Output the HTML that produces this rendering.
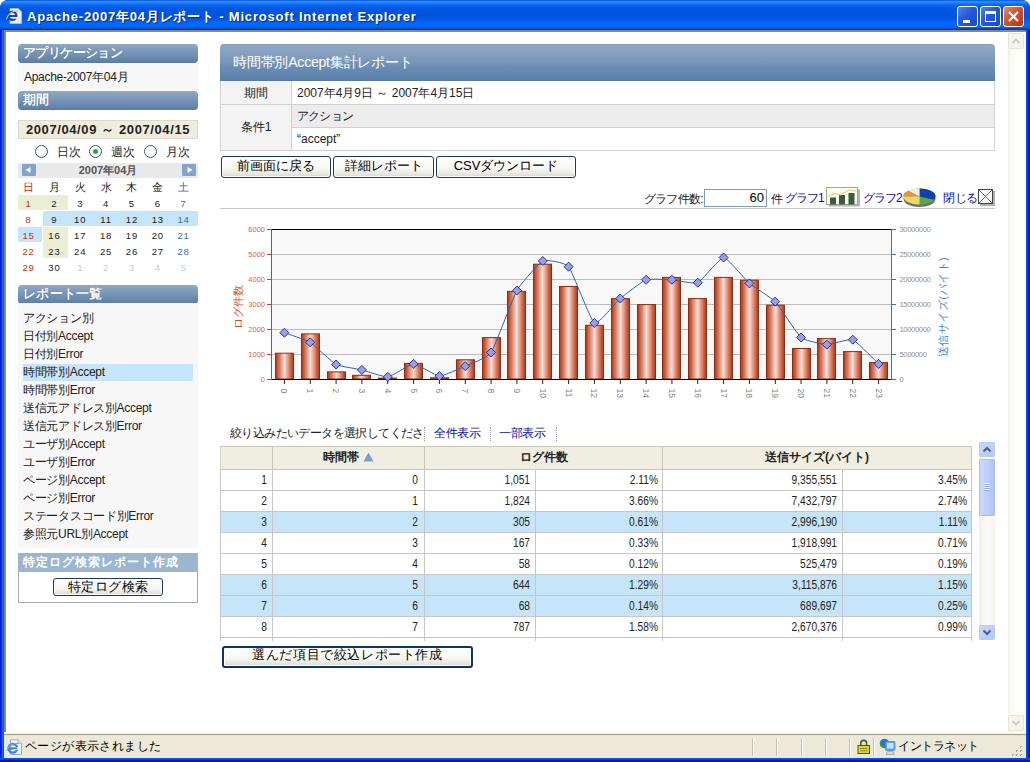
<!DOCTYPE html>
<html lang="ja">
<head>
<meta charset="utf-8">
<title>Apache-2007年04月レポート - Microsoft Internet Explorer</title>
<style>
*{box-sizing:border-box;margin:0;padding:0}
html,body{width:1030px;height:762px;overflow:hidden;background:#fff}
body{font-family:"Liberation Sans",sans-serif;font-size:12px;color:#222;position:relative}
.abs{position:absolute}
.nw{white-space:nowrap;overflow:hidden}
/* window chrome */
#win{position:absolute;left:0;top:0;width:1030px;height:762px;background:#0831d9;border-radius:8px 8px 0 0;overflow:hidden}
#titlebar{position:absolute;left:0;top:0;width:1030px;height:30px;border-radius:8px 8px 0 0;
background:linear-gradient(to bottom,#0050d8 0px,#2e88fc 1.500px,#2a84fa 2.500px,#1270f0 4px,#0a62ea 6px,#0056e2 9px,#0054e0 16px,#0058ea 19px,#0264f6 22px,#0468fa 24px,#0466f6 27px,#0050d4 28.500px,#002e98 30px)}
#title{position:absolute;left:27px;top:9px;height:16px;line-height:16px;font-size:13px;font-weight:bold;color:#fff;letter-spacing:.8px;text-shadow:1px 1px 1px #0a2a80;white-space:nowrap}
.tbtn{position:absolute;top:6px;width:21px;height:21px;border:1px solid #fff;border-radius:3px;background:linear-gradient(135deg,#4f83ef 0%,#2659dd 45%,#1a48c8 100%)}
#client{position:absolute;left:4px;top:30px;width:1022px;height:728px;background:#fff;border-top:2px solid #8a8a84;border-left:2px solid #8a8a84}
/* status bar */
#status{position:absolute;left:4px;top:732px;width:1022px;height:26px;background:linear-gradient(to bottom,#fbfaf4 0,#f2f0e6 2px,#a29f8e 2px,#a29f8e 3px,#dedbca 3px,#ece9d8 4.500px,#ece9d8 100%);font-size:12px;color:#000}
.sep{position:absolute;top:6px;width:2px;height:18px;border-left:1px solid #c5c2b2;border-right:1px solid #fff}
/* page scrollbar */
#vsb{position:absolute;left:1008px;top:32px;width:17px;height:700px;background:linear-gradient(to right,#f1f0e8 0,#fbfaf5 3px,#fefefb 10px,#fdfdf9 18px)}
.sbbtn{position:absolute;left:0;width:16px;height:16px;border:1px solid #e6e4d9;border-radius:2px;background:#f5f4ed}
/* side panel */
.shead{position:absolute;left:18px;width:180px;height:19px;border-radius:4px;color:#fff;font-weight:bold;font-size:13px;line-height:18px;padding-left:5px;
background:linear-gradient(to bottom,#90a8c2 0%,#7b98b9 40%,#6384ab 85%,#587aa3 100%);text-shadow:0 0 1px #3d5878;white-space:nowrap;overflow:hidden}
.sbg{position:absolute;left:18px;width:180px;background:#f7f7f7}
.li{position:absolute;left:23px;height:18px;line-height:18px;font-size:12px;color:#222;white-space:nowrap;letter-spacing:-.3px}
.cal{position:absolute;width:26px;height:15px;line-height:15px;text-align:center;font-size:9.500px;letter-spacing:.8px;color:#1a1a1a}
.red{color:#c03020}.blue{color:#3a6ea5}.gray{color:#c8c8c8}
.radio{position:absolute;width:13px;height:13px;border-radius:50%;border:1px solid #37608f;background:radial-gradient(circle at 35% 35%,#fff 40%,#dcdcd4 100%)}
.xpbtn{position:absolute;height:22px;border:1px solid #17376d;border-radius:3px;background:linear-gradient(to bottom,#fff 0%,#f6f6f2 60%,#e4e3da 90%,#d2d0c4 100%);
font-size:13px;line-height:17px;text-align:center;color:#000;white-space:nowrap;overflow:hidden;box-shadow:inset 0 0 0 1px #fdfdfb}
/* main */
#mhead{position:absolute;left:220px;top:44px;width:775px;height:37px;border-radius:4px 4px 0 0;color:#fff;font-size:14px;line-height:37px;padding-left:13px;letter-spacing:-.2px;
background:linear-gradient(to bottom,#8798aa 0,#8ea6c2 1px,#88a2c0 22%,#7a98ba 45%,#6a8cb3 65%,#5b80aa 96%,#56799f 100%);white-space:nowrap;overflow:hidden}
.cell{position:absolute;border:1px solid #d0d0d0;font-size:12px;color:#222;white-space:nowrap;overflow:hidden}
.lnk{color:#0808b4}
/* data table */
.th{position:absolute;top:446px;height:24px;background:#f0eee1;border:1px solid #c9c7ba;font-weight:bold;font-size:12px;line-height:21px;text-align:center;color:#222;white-space:nowrap;overflow:hidden}
.row{position:absolute;left:221px;width:751px;height:21px;border-bottom:1px solid #c6c6c6}
.row.sel{background:#c6e4fa}
.row span{position:absolute;top:0;height:20px;line-height:21px;font-size:12px;color:#222;text-align:right;white-space:nowrap;transform:scaleX(.85);transform-origin:100% 50%}
.vl{position:absolute;width:1px;background:#c6c6c6}
</style>
</head>
<body>
<div id="win">
<div id="titlebar">
<svg class="abs" style="left:5px;top:7px" width="18" height="18" viewBox="0 0 18 18">
<path d="M5 1.500h8l3.500 3.500v11.500H5z" fill="#f6f3ea" stroke="#c8c4b4" stroke-width=".7"/>
<path d="M13 1.500v3.500h3.500z" fill="#fff" stroke="#b4b0a0" stroke-width=".5"/>
<path d="M9.500 9.500h6.500v6.500H8z" fill="#f2e6e0" opacity=".8"/>
<circle cx="7.300" cy="8.800" r="4" fill="none" stroke="#1746b0" stroke-width="2.400"/>
<path d="M3.500 8.900h8.200" stroke="#1746b0" stroke-width="2"/>
<path d="M8.300 10h4.700v1.700H8.300z" fill="#f6f3ea"/>
<path d="M1.300 12.300C2.800 6.800 8.500 3 13 4.300" fill="none" stroke="#8ac0f8" stroke-width="1.200"/>
</svg>
<div id="title">Apache-2007年04月レポート - Microsoft Internet Explorer</div>
<div class="tbtn" style="left:957px"><div class="abs" style="left:5px;top:13px;width:7px;height:3px;background:#fff"></div></div>
<div class="tbtn" style="left:980px"><div class="abs" style="left:4px;top:4px;width:11px;height:11px;border:1px solid #fff;border-top-width:3px"></div></div>
<div class="tbtn" style="left:1003px;background:linear-gradient(135deg,#e88a6a 0%,#d8512a 45%,#b83210 100%)"><svg class="abs" style="left:0;top:0" width="19" height="19"><path d="M5 5l9 9M14 5l-9 9" stroke="#fff" stroke-width="2.2"/></svg></div>
</div>
<div id="client"></div>
<div class="abs" style="left:0;top:30px;width:4px;height:732px;background:linear-gradient(to right,#0019cf 0,#0019cf 1px,#0831d9 1px,#0831d9 2px,#166aee 2px,#166aee 3px,#0855dd 3px)"></div>
<div class="abs" style="left:1026px;top:30px;width:4px;height:732px;background:linear-gradient(to right,#0855dd 0,#0855dd 1px,#0441d8 1px,#0441d8 2px,#0029c4 2px,#0029c4 3px,#00138c 3px)"></div>
<div class="abs" style="left:0;top:758px;width:1030px;height:4px;background:linear-gradient(to bottom,#0855dd 0,#0855dd 1px,#0441d8 1px,#0441d8 2px,#001dbb 2px,#001dbb 3px,#00138c 3px)"></div>
<div id="vsb"><div class="sbbtn" style="top:1px"><svg width="14" height="14"><path d="M3.5 9l3.5-3.5L10.5 9" fill="none" stroke="#cfcdc0" stroke-width="1.8"/></svg></div><div class="sbbtn" style="top:683px"><svg width="14" height="14"><path d="M3.5 5l3.5 3.5L10.5 5" fill="none" stroke="#cfcdc0" stroke-width="1.8"/></svg></div></div>
<div id="status">
<svg class="abs" style="left:2px;top:7px" width="17" height="17" viewBox="0 0 17 17"><path d="M4.500 .8h7.500l3.500 3.500v11.200h-11z" fill="#f4f6fc" stroke="#8a98b8" stroke-width=".8"/><path d="M12 .8v3.500h3.500" fill="#dfe6f4" stroke="#8a98b8" stroke-width=".6"/><circle cx="6.800" cy="9.300" r="4.300" fill="none" stroke="#2f86e0" stroke-width="2.300"/><path d="M3 9.500h7.500" stroke="#2f86e0" stroke-width="1.900"/><path d="M7.500 8.200h5.500v2.600h-5.500z" fill="#f4f6fc"/><path d="M3 9.300h8.200" stroke="#2f86e0" stroke-width="1.700"/><path d="M.8 11.800C2.500 6.500 8 3.600 12.500 4.600" fill="none" stroke="#66aef0" stroke-width="1.100"/></svg>
<div class="abs nw" style="left:21px;top:6px;height:17px;line-height:17px;letter-spacing:.4px">ページが表示されました</div>
<div class="sep" style="left:748px"></div>
<div class="sep" style="left:772px"></div>
<div class="sep" style="left:797px"></div>
<div class="sep" style="left:821px"></div>
<div class="sep" style="left:845px"></div>
<div class="sep" style="left:869px"></div>
<svg class="abs" style="left:852px;top:6px" width="15" height="17" viewBox="0 0 15 17"><path d="M4.800 8V5.300a2.900 2.900 0 015.800 0V8" fill="none" stroke="#505048" stroke-width="1.600"/><rect x="2" y="7.500" width="11.500" height="8" fill="#e6d628" stroke="#56500c" stroke-width="1"/><path d="M4 10.500h7.500M4 12.800h7.500" stroke="#8c8010" stroke-width=".9"/></svg>
<svg class="abs" style="left:874px;top:5px" width="19" height="20" viewBox="0 0 19 20"><circle cx="6.500" cy="6.500" r="4.800" fill="#2f9e48"/><path d="M3 4c2-2.500 5-1.500 6.500 0s1 4.500-1.500 5.500c-2 .5-3.500-.5-5-2z" fill="#2c6edc"/><rect x="7.500" y="4.500" width="9.500" height="9" rx="1" fill="#5aa6ee" stroke="#4a8ad8" stroke-width=".8"/><rect x="9" y="6" width="6.500" height="5.500" fill="#bfe4ff"/><path d="M9.500 14.500h5.500l1.500 3H8z" fill="#d8d8d4" stroke="#8c8c88" stroke-width=".6"/></svg>
<div class="abs nw" style="left:894px;top:6px;height:17px;line-height:17px;letter-spacing:-.5px">イントラネット</div>
<svg class="abs" style="left:1006px;top:12px" width="14" height="14"><g fill="#b0ad9c"><rect x="10" y="10" width="2" height="2"/><rect x="6" y="10" width="2" height="2"/><rect x="2" y="10" width="2" height="2"/><rect x="10" y="6" width="2" height="2"/><rect x="6" y="6" width="2" height="2"/><rect x="10" y="2" width="2" height="2"/></g><g fill="#fff"><rect x="11" y="11" width="1" height="1"/><rect x="7" y="11" width="1" height="1"/><rect x="3" y="11" width="1" height="1"/><rect x="11" y="7" width="1" height="1"/><rect x="7" y="7" width="1" height="1"/><rect x="11" y="3" width="1" height="1"/></g></svg>
</div>
<div class="sbg" style="top:62px;height:29px"></div>
<div class="shead" style="top:44px;letter-spacing:-.6px">アプリケーション</div>
<div class="li" style="top:68px;left:24px">Apache-2007年04月</div>
<div class="shead" style="top:91px">期間</div>
<div class="abs nw" style="left:18px;top:120px;width:180px;height:19px;background:#efecdd;border:1px solid #dcd9ca;font-weight:bold;font-size:13px;line-height:17px;text-align:center;color:#222;letter-spacing:.6px">2007/04/09 ～ 2007/04/15</div>
<div class="radio" style="left:35px;top:145px"></div>
<div class="abs nw" style="left:57px;top:144px;height:16px;line-height:16px;font-size:12px">日次</div>
<div class="radio" style="left:89px;top:145px"><div class="abs" style="left:3px;top:3px;width:5px;height:5px;border-radius:50%;background:#2fa82f"></div></div>
<div class="abs nw" style="left:111px;top:144px;height:16px;line-height:16px;font-size:12px">週次</div>
<div class="radio" style="left:144px;top:145px"></div>
<div class="abs nw" style="left:166px;top:144px;height:16px;line-height:16px;font-size:12px">月次</div>
<div class="abs" style="left:18px;top:163px;width:180px;height:15px;background:#e9e9e9"></div>
<div class="abs nw" style="left:18px;top:163px;width:180px;height:15px;line-height:15px;text-align:center;font-size:11px;font-weight:bold;color:#555">2007年04月</div>
<div class="abs" style="left:22px;top:164px;width:14px;height:12px;background:#86a3d0;border-radius:1px"><svg class="abs" style="left:0;top:0" width="14" height="12"><path d="M8.500 3v6L3.500 6z" fill="#fff"/></svg></div>
<div class="abs" style="left:182px;top:164px;width:14px;height:12px;background:#86a3d0;border-radius:1px"><svg class="abs" style="left:0;top:0" width="14" height="12"><path d="M5.500 3v6l5-3z" fill="#fff"/></svg></div>
<div class="cal red" style="left:15.5px;top:179px;font-size:11px;letter-spacing:0;height:16px;line-height:16px">日</div>
<div class="cal " style="left:41.4px;top:179px;font-size:11px;letter-spacing:0;height:16px;line-height:16px">月</div>
<div class="cal " style="left:67.2px;top:179px;font-size:11px;letter-spacing:0;height:16px;line-height:16px">火</div>
<div class="cal " style="left:93.1px;top:179px;font-size:11px;letter-spacing:0;height:16px;line-height:16px">水</div>
<div class="cal " style="left:118.9px;top:179px;font-size:11px;letter-spacing:0;height:16px;line-height:16px">木</div>
<div class="cal " style="left:144.8px;top:179px;font-size:11px;letter-spacing:0;height:16px;line-height:16px">金</div>
<div class="cal blue" style="left:170.6px;top:179px;font-size:11px;letter-spacing:0;height:16px;line-height:16px">土</div>
<div class="abs" style="left:18.0px;top:195px;width:50.0px;height:15px;background:#e9efd3"></div>
<div class="abs" style="left:43.3px;top:211px;width:154.7px;height:15px;background:#c6e4fa"></div>
<div class="abs" style="left:18.0px;top:227px;width:24.4px;height:15px;background:#c6e4fa"></div>
<div class="abs" style="left:43.3px;top:227px;width:24.7px;height:16px;background:#e9efd3"></div>
<div class="abs" style="left:43.3px;top:243px;width:24.7px;height:15px;background:#e9efd3"></div>
<div class="cal red" style="left:15.5px;top:196px">1</div>
<div class="cal " style="left:41.4px;top:196px">2</div>
<div class="cal " style="left:67.2px;top:196px">3</div>
<div class="cal " style="left:93.1px;top:196px">4</div>
<div class="cal " style="left:118.9px;top:196px">5</div>
<div class="cal " style="left:144.8px;top:196px">6</div>
<div class="cal blue" style="left:170.6px;top:196px">7</div>
<div class="cal red" style="left:15.5px;top:212px">8</div>
<div class="cal " style="left:41.4px;top:212px">9</div>
<div class="cal " style="left:67.2px;top:212px">10</div>
<div class="cal " style="left:93.1px;top:212px">11</div>
<div class="cal " style="left:118.9px;top:212px">12</div>
<div class="cal " style="left:144.8px;top:212px">13</div>
<div class="cal blue" style="left:170.6px;top:212px">14</div>
<div class="cal red" style="left:15.5px;top:228px">15</div>
<div class="cal " style="left:41.4px;top:228px">16</div>
<div class="cal " style="left:67.2px;top:228px">17</div>
<div class="cal " style="left:93.1px;top:228px">18</div>
<div class="cal " style="left:118.9px;top:228px">19</div>
<div class="cal " style="left:144.8px;top:228px">20</div>
<div class="cal blue" style="left:170.6px;top:228px">21</div>
<div class="cal red" style="left:15.5px;top:244px">22</div>
<div class="cal " style="left:41.4px;top:244px">23</div>
<div class="cal " style="left:67.2px;top:244px">24</div>
<div class="cal " style="left:93.1px;top:244px">25</div>
<div class="cal " style="left:118.9px;top:244px">26</div>
<div class="cal " style="left:144.8px;top:244px">27</div>
<div class="cal blue" style="left:170.6px;top:244px">28</div>
<div class="cal red" style="left:15.5px;top:260px">29</div>
<div class="cal " style="left:41.4px;top:260px">30</div>
<div class="cal gray" style="left:67.2px;top:260px">1</div>
<div class="cal gray" style="left:93.1px;top:260px">2</div>
<div class="cal gray" style="left:118.9px;top:260px">3</div>
<div class="cal gray" style="left:144.8px;top:260px">4</div>
<div class="cal gray" style="left:170.6px;top:260px;color:#b9cfe4">5</div>
<div class="shead" style="top:285px;letter-spacing:.3px">レポート一覧</div>
<div class="sbg" style="top:303px;height:245px"></div>
<div class="li" style="top:309px">アクション別</div>
<div class="li" style="top:327px">日付別Accept</div>
<div class="li" style="top:345px">日付別Error</div>
<div class="abs" style="left:23px;top:364px;width:170px;height:17px;background:#c6e4fa"></div>
<div class="li" style="top:363px">時間帯別Accept</div>
<div class="li" style="top:381px">時間帯別Error</div>
<div class="li" style="top:399px">送信元アドレス別Accept</div>
<div class="li" style="top:417px">送信元アドレス別Error</div>
<div class="li" style="top:435px">ユーザ別Accept</div>
<div class="li" style="top:453px">ユーザ別Error</div>
<div class="li" style="top:471px">ページ別Accept</div>
<div class="li" style="top:489px">ページ別Error</div>
<div class="li" style="top:507px">ステータスコード別Error</div>
<div class="li" style="top:525px">参照元URL別Accept</div>
<div class="abs" style="left:18px;top:553px;width:180px;height:50px;border:1px solid #a8a8b0;background:#fff"></div>
<div class="abs nw" style="left:18px;top:553px;width:180px;height:19px;background:#9cb6d0;color:#fff;font-weight:bold;font-size:12px;line-height:19px;padding-left:5px;letter-spacing:1px">特定ログ検索レポート作成</div>
<div class="xpbtn" style="left:53px;top:578px;width:110px;height:18px;line-height:15px;letter-spacing:.5px">特定ログ検索</div>
<div class="cell" style="left:220px;top:80px;width:72px;height:25px;background:#f3f3f3;line-height:24px;text-align:center">期間</div>
<div class="cell" style="left:291px;top:80px;width:704px;height:25px;line-height:24px;padding-left:5px;letter-spacing:0">2007年4月9日 ～ 2007年4月15日</div>
<div class="cell" style="left:220px;top:104px;width:72px;height:47px;background:#f3f3f3;line-height:45px;text-align:center">条件1</div>
<div class="cell" style="left:291px;top:104px;width:704px;height:24px;background:#ececec;line-height:22px;padding-left:5px;letter-spacing:-.8px">アクション</div>
<div class="cell" style="left:291px;top:127px;width:704px;height:24px;line-height:22px;padding-left:5px">“accept”</div>
<div id="mhead">時間帯別Accept集計レポート</div>
<div class="xpbtn" style="left:221px;top:156px;width:110px">前画面に戻る</div>
<div class="xpbtn" style="left:333px;top:156px;width:101px">詳細レポート</div>
<div class="xpbtn" style="left:436px;top:156px;width:140px">CSVダウンロード</div>
<div class="abs" style="right:327px;top:190px;height:18px;line-height:18px;letter-spacing:-.7px;white-space:nowrap">グラフ件数:</div>
<div class="abs nw" style="left:704px;top:189px;width:63px;height:18px;border:1px solid #7f9db9;background:#fff;text-align:right;padding-right:2px;font-size:13px;line-height:16px;color:#000">60</div>
<div class="abs nw" style="left:771px;top:190px;height:18px;line-height:18px">件</div>
<div class="abs lnk" style="right:206px;top:189px;height:18px;line-height:18px;letter-spacing:-.8px;white-space:nowrap">グラフ1</div>
<svg class="abs" style="left:826px;top:187px" width="35" height="21" viewBox="0 0 35 21"><rect x="2.500" y="2.500" width="31.500" height="17" fill="#b4b4b0"/><rect x=".5" y=".5" width="31" height="17" fill="#fdfdee" stroke="#a4a494"/><rect x="4" y="10.500" width="6" height="7" fill="#3c5c38"/><rect x="13" y="8" width="6" height="9.500" fill="#3c5c38"/><rect x="22.500" y="6" width="6" height="11.500" fill="#3c5c38"/><path d="M1.500 9.500l7.500-3 5.500 1.500 8-5 8 1" fill="none" stroke="#dccc6c" stroke-width="1"/></svg>
<div class="abs lnk" style="right:128px;top:189px;height:18px;line-height:18px;letter-spacing:-.8px;white-space:nowrap">グラフ2</div>
<svg class="abs" style="left:902px;top:187px" width="35" height="21" viewBox="0 0 35 21"><ellipse cx="17.5" cy="12" rx="16" ry="8" fill="#707070"/><ellipse cx="17.5" cy="9.5" rx="16" ry="8" fill="#58a848"/><path d="M17.5 9.5V1.5A16 8 0 0133.5 9.5a16 8 0 01-1.5 3.2z" fill="#1040b0"/><path d="M17.5 9.5L6 3.8A16 8 0 0117.5 1.5z" fill="#f0ece0"/><path d="M17.5 9.5H1.5A16 8 0 016 3.8z" fill="#f09030"/><path d="M17.5 9.5V17.5A16 8 0 011.5 9.5z" fill="#f0d868"/></svg>
<div class="abs lnk" style="right:53px;top:189px;height:18px;line-height:18px;letter-spacing:-.8px;white-space:nowrap">閉じる</div>
<svg class="abs" style="left:977px;top:188px" width="19" height="19" viewBox="0 0 19 19"><rect x="3" y="3" width="15" height="15" fill="#b0b0b0"/><rect x="1.5" y="1.5" width="14" height="14" fill="#fff" stroke="#444"/><path d="M1.5 1.5l14 14M15.500 1.5l-14 14" stroke="#444" stroke-width=".8"/></svg>
<div class="abs" style="left:220px;top:208px;width:775px;height:1px;background:#c8c8c8"></div>
<svg class="abs" style="left:225px;top:218px" width="770" height="190" viewBox="0 0 770 190" font-family="Liberation Sans, sans-serif">
<defs><linearGradient id="bg" x1="0" x2="1" y1="0" y2="0"><stop offset="0" stop-color="#a83a1c"/><stop offset=".12" stop-color="#c4583a"/><stop offset=".5" stop-color="#fddcd2"/><stop offset=".88" stop-color="#c4583a"/><stop offset="1" stop-color="#a83a1c"/></linearGradient></defs>
<rect x="46" y="11" width="620" height="150" fill="#f8f8f8"/>
<rect x="46" y="136" width="620" height="1" fill="#bcbcbc"/>
<rect x="46" y="111" width="620" height="1" fill="#bcbcbc"/>
<rect x="46" y="86" width="620" height="1" fill="#bcbcbc"/>
<rect x="46" y="61" width="620" height="1" fill="#bcbcbc"/>
<rect x="46" y="36" width="620" height="1" fill="#bcbcbc"/>
<rect x="50.5" y="135.2" width="18" height="25.8" fill="url(#bg)" stroke="#8e2c14" stroke-width="1"/>
<rect x="76.5" y="115.9" width="18" height="45.1" fill="url(#bg)" stroke="#8e2c14" stroke-width="1"/>
<rect x="102.5" y="153.9" width="18" height="7.1" fill="url(#bg)" stroke="#8e2c14" stroke-width="1"/>
<rect x="127.5" y="157.3" width="18" height="3.7" fill="url(#bg)" stroke="#8e2c14" stroke-width="1"/>
<rect x="153.5" y="160.1" width="18" height="1.0" fill="url(#bg)" stroke="#8e2c14" stroke-width="1"/>
<rect x="179.5" y="145.4" width="18" height="15.6" fill="url(#bg)" stroke="#8e2c14" stroke-width="1"/>
<rect x="205.5" y="159.8" width="18" height="1.2" fill="url(#bg)" stroke="#8e2c14" stroke-width="1"/>
<rect x="231.5" y="141.8" width="18" height="19.2" fill="url(#bg)" stroke="#8e2c14" stroke-width="1"/>
<rect x="257.5" y="119.6" width="18" height="41.4" fill="url(#bg)" stroke="#8e2c14" stroke-width="1"/>
<rect x="282.5" y="73.4" width="18" height="87.6" fill="url(#bg)" stroke="#8e2c14" stroke-width="1"/>
<rect x="308.5" y="46.2" width="18" height="114.8" fill="url(#bg)" stroke="#8e2c14" stroke-width="1"/>
<rect x="334.5" y="68.5" width="18" height="92.5" fill="url(#bg)" stroke="#8e2c14" stroke-width="1"/>
<rect x="360.5" y="107.3" width="18" height="53.7" fill="url(#bg)" stroke="#8e2c14" stroke-width="1"/>
<rect x="386.5" y="80.6" width="18" height="80.4" fill="url(#bg)" stroke="#8e2c14" stroke-width="1"/>
<rect x="412.5" y="86.6" width="18" height="74.4" fill="url(#bg)" stroke="#8e2c14" stroke-width="1"/>
<rect x="437.5" y="59.4" width="18" height="101.6" fill="url(#bg)" stroke="#8e2c14" stroke-width="1"/>
<rect x="463.5" y="80.6" width="18" height="80.4" fill="url(#bg)" stroke="#8e2c14" stroke-width="1"/>
<rect x="489.5" y="59.4" width="18" height="101.6" fill="url(#bg)" stroke="#8e2c14" stroke-width="1"/>
<rect x="515.5" y="62.2" width="18" height="98.8" fill="url(#bg)" stroke="#8e2c14" stroke-width="1"/>
<rect x="541.5" y="87.2" width="18" height="73.8" fill="url(#bg)" stroke="#8e2c14" stroke-width="1"/>
<rect x="567.5" y="130.5" width="18" height="30.5" fill="url(#bg)" stroke="#8e2c14" stroke-width="1"/>
<rect x="592.5" y="120.6" width="18" height="40.4" fill="url(#bg)" stroke="#8e2c14" stroke-width="1"/>
<rect x="618.5" y="133.6" width="18" height="27.4" fill="url(#bg)" stroke="#8e2c14" stroke-width="1"/>
<rect x="644.5" y="144.6" width="18" height="16.4" fill="url(#bg)" stroke="#8e2c14" stroke-width="1"/>
<rect x="46" y="11" width="621" height="1" fill="#000"/>
<rect x="46" y="161" width="621" height="1" fill="#000"/>
<rect x="46" y="11" width="1" height="151" fill="#c8401c"/>
<rect x="666" y="11" width="1" height="151" fill="#2f78b8"/>
<rect x="42" y="161" width="4" height="1" fill="#c8401c"/>
<rect x="667" y="161" width="4" height="1" fill="#2f78b8"/>
<text x="40" y="164" font-size="7.5" fill="#dc6040" text-anchor="end">0</text>
<text x="674.5" y="164.2" font-size="7.6" letter-spacing="-.35" fill="#8e8e8e">0</text>
<rect x="42" y="136" width="4" height="1" fill="#c8401c"/>
<rect x="667" y="136" width="4" height="1" fill="#2f78b8"/>
<text x="40" y="139" font-size="7.5" fill="#dc6040" text-anchor="end">1000</text>
<text x="674.5" y="139.2" font-size="7.6" letter-spacing="-.35" fill="#8e8e8e">5000000</text>
<rect x="42" y="111" width="4" height="1" fill="#c8401c"/>
<rect x="667" y="111" width="4" height="1" fill="#2f78b8"/>
<text x="40" y="114" font-size="7.5" fill="#dc6040" text-anchor="end">2000</text>
<text x="674.5" y="114.2" font-size="7.6" letter-spacing="-.35" fill="#8e8e8e">10000000</text>
<rect x="42" y="86" width="4" height="1" fill="#c8401c"/>
<rect x="667" y="86" width="4" height="1" fill="#2f78b8"/>
<text x="40" y="89" font-size="7.5" fill="#dc6040" text-anchor="end">3000</text>
<text x="674.5" y="89.2" font-size="7.6" letter-spacing="-.35" fill="#8e8e8e">15000000</text>
<rect x="42" y="61" width="4" height="1" fill="#c8401c"/>
<rect x="667" y="61" width="4" height="1" fill="#2f78b8"/>
<text x="40" y="64" font-size="7.5" fill="#dc6040" text-anchor="end">4000</text>
<text x="674.5" y="64.2" font-size="7.6" letter-spacing="-.35" fill="#8e8e8e">20000000</text>
<rect x="42" y="36" width="4" height="1" fill="#c8401c"/>
<rect x="667" y="36" width="4" height="1" fill="#2f78b8"/>
<text x="40" y="39" font-size="7.5" fill="#dc6040" text-anchor="end">5000</text>
<text x="674.5" y="39.2" font-size="7.6" letter-spacing="-.35" fill="#8e8e8e">25000000</text>
<rect x="42" y="11" width="4" height="1" fill="#c8401c"/>
<rect x="667" y="11" width="4" height="1" fill="#2f78b8"/>
<text x="40" y="14" font-size="7.5" fill="#dc6040" text-anchor="end">6000</text>
<text x="674.5" y="14.2" font-size="7.6" letter-spacing="-.35" fill="#8e8e8e">30000000</text>
<rect x="58.9" y="162" width="1" height="4" fill="#222"/>
<text transform="translate(56,170.5) rotate(90)" font-size="8.5" fill="#868686">0</text>
<rect x="84.8" y="162" width="1" height="4" fill="#222"/>
<text transform="translate(82,170.5) rotate(90)" font-size="8.5" fill="#868686">1</text>
<rect x="110.6" y="162" width="1" height="4" fill="#222"/>
<text transform="translate(108,170.5) rotate(90)" font-size="8.5" fill="#868686">2</text>
<rect x="136.4" y="162" width="1" height="4" fill="#222"/>
<text transform="translate(134,170.5) rotate(90)" font-size="8.5" fill="#868686">3</text>
<rect x="162.2" y="162" width="1" height="4" fill="#222"/>
<text transform="translate(160,170.5) rotate(90)" font-size="8.5" fill="#868686">4</text>
<rect x="188.1" y="162" width="1" height="4" fill="#222"/>
<text transform="translate(186,170.5) rotate(90)" font-size="8.5" fill="#868686">5</text>
<rect x="213.9" y="162" width="1" height="4" fill="#222"/>
<text transform="translate(211,170.5) rotate(90)" font-size="8.5" fill="#868686">6</text>
<rect x="239.8" y="162" width="1" height="4" fill="#222"/>
<text transform="translate(237,170.5) rotate(90)" font-size="8.5" fill="#868686">7</text>
<rect x="265.6" y="162" width="1" height="4" fill="#222"/>
<text transform="translate(263,170.5) rotate(90)" font-size="8.5" fill="#868686">8</text>
<rect x="291.4" y="162" width="1" height="4" fill="#222"/>
<text transform="translate(289,170.5) rotate(90)" font-size="8.5" fill="#868686">9</text>
<rect x="317.2" y="162" width="1" height="4" fill="#222"/>
<text transform="translate(315,170.5) rotate(90)" font-size="8.5" fill="#868686">10</text>
<rect x="343.1" y="162" width="1" height="4" fill="#222"/>
<text transform="translate(341,170.5) rotate(90)" font-size="8.5" fill="#868686">11</text>
<rect x="368.9" y="162" width="1" height="4" fill="#222"/>
<text transform="translate(366,170.5) rotate(90)" font-size="8.5" fill="#868686">12</text>
<rect x="394.8" y="162" width="1" height="4" fill="#222"/>
<text transform="translate(392,170.5) rotate(90)" font-size="8.5" fill="#868686">13</text>
<rect x="420.6" y="162" width="1" height="4" fill="#222"/>
<text transform="translate(418,170.5) rotate(90)" font-size="8.5" fill="#868686">14</text>
<rect x="446.4" y="162" width="1" height="4" fill="#222"/>
<text transform="translate(444,170.5) rotate(90)" font-size="8.5" fill="#868686">15</text>
<rect x="472.2" y="162" width="1" height="4" fill="#222"/>
<text transform="translate(470,170.5) rotate(90)" font-size="8.5" fill="#868686">16</text>
<rect x="498.1" y="162" width="1" height="4" fill="#222"/>
<text transform="translate(496,170.5) rotate(90)" font-size="8.5" fill="#868686">17</text>
<rect x="523.9" y="162" width="1" height="4" fill="#222"/>
<text transform="translate(521,170.5) rotate(90)" font-size="8.5" fill="#868686">18</text>
<rect x="549.8" y="162" width="1" height="4" fill="#222"/>
<text transform="translate(547,170.5) rotate(90)" font-size="8.5" fill="#868686">19</text>
<rect x="575.6" y="162" width="1" height="4" fill="#222"/>
<text transform="translate(573,170.5) rotate(90)" font-size="8.5" fill="#868686">20</text>
<rect x="601.4" y="162" width="1" height="4" fill="#222"/>
<text transform="translate(599,170.5) rotate(90)" font-size="8.5" fill="#868686">21</text>
<rect x="627.2" y="162" width="1" height="4" fill="#222"/>
<text transform="translate(625,170.5) rotate(90)" font-size="8.5" fill="#868686">22</text>
<rect x="653.1" y="162" width="1" height="4" fill="#222"/>
<text transform="translate(651,170.5) rotate(90)" font-size="8.5" fill="#868686">23</text>
<path fill="none" stroke="#2d66a6" stroke-width="1" d="M59.4 114.7C61.2 115.4 81.6 122.1 85.2 124.3C88.9 126.6 107.5 144.6 111.1 146.5C114.7 148.4 133.3 151.0 136.9 151.9C140.5 152.8 159.1 159.3 162.8 158.9C166.4 158.5 185.0 146.0 188.6 145.9C192.2 145.9 210.8 157.9 214.4 158.1C218.0 158.2 236.6 149.8 240.2 148.1C243.9 146.5 262.5 139.8 266.1 134.5C269.7 129.2 288.3 78.9 291.9 72.5C295.5 66.1 314.1 44.7 317.8 43.0C321.4 41.3 340.0 44.4 343.6 48.7C347.2 53.0 365.8 102.8 369.4 105.0C373.0 107.2 391.6 83.5 395.2 80.5C398.9 77.5 417.5 63.1 421.1 61.8C424.7 60.5 443.3 61.6 446.9 61.8C450.5 62.0 469.1 66.3 472.8 64.7C476.4 63.1 495.0 39.5 498.6 39.5C502.2 39.5 520.8 62.3 524.4 65.4C528.0 68.5 546.6 79.9 550.2 83.6C553.9 87.4 572.5 116.5 576.1 119.5C579.7 122.6 598.3 126.4 601.9 126.6C605.5 126.8 624.1 120.4 627.8 121.8C631.4 123.1 651.8 144.2 653.6 145.9"/>
<path d="M59.4 110.2l4.500 4.500l-4.500 4.500l-4.500 -4.500z" fill="#9a9cf0" stroke="#1c2a6c" stroke-width=".9"/>
<path d="M85.2 119.8l4.500 4.500l-4.500 4.500l-4.500 -4.500z" fill="#9a9cf0" stroke="#1c2a6c" stroke-width=".9"/>
<path d="M111.1 142.0l4.500 4.500l-4.500 4.500l-4.500 -4.500z" fill="#9a9cf0" stroke="#1c2a6c" stroke-width=".9"/>
<path d="M136.9 147.4l4.500 4.500l-4.500 4.500l-4.500 -4.500z" fill="#9a9cf0" stroke="#1c2a6c" stroke-width=".9"/>
<path d="M162.8 154.4l4.500 4.500l-4.500 4.500l-4.500 -4.500z" fill="#9a9cf0" stroke="#1c2a6c" stroke-width=".9"/>
<path d="M188.6 141.4l4.500 4.500l-4.500 4.500l-4.500 -4.500z" fill="#9a9cf0" stroke="#1c2a6c" stroke-width=".9"/>
<path d="M214.4 153.6l4.500 4.500l-4.500 4.500l-4.500 -4.500z" fill="#9a9cf0" stroke="#1c2a6c" stroke-width=".9"/>
<path d="M240.2 143.6l4.500 4.500l-4.500 4.500l-4.500 -4.500z" fill="#9a9cf0" stroke="#1c2a6c" stroke-width=".9"/>
<path d="M266.1 130.0l4.500 4.500l-4.500 4.500l-4.500 -4.500z" fill="#9a9cf0" stroke="#1c2a6c" stroke-width=".9"/>
<path d="M291.9 68.0l4.500 4.500l-4.500 4.500l-4.500 -4.500z" fill="#9a9cf0" stroke="#1c2a6c" stroke-width=".9"/>
<path d="M317.8 38.5l4.500 4.500l-4.500 4.500l-4.500 -4.500z" fill="#9a9cf0" stroke="#1c2a6c" stroke-width=".9"/>
<path d="M343.6 44.2l4.500 4.500l-4.500 4.500l-4.500 -4.500z" fill="#9a9cf0" stroke="#1c2a6c" stroke-width=".9"/>
<path d="M369.4 100.5l4.500 4.500l-4.500 4.500l-4.500 -4.500z" fill="#9a9cf0" stroke="#1c2a6c" stroke-width=".9"/>
<path d="M395.2 76.0l4.500 4.500l-4.500 4.500l-4.500 -4.500z" fill="#9a9cf0" stroke="#1c2a6c" stroke-width=".9"/>
<path d="M421.1 57.3l4.500 4.500l-4.500 4.500l-4.500 -4.500z" fill="#9a9cf0" stroke="#1c2a6c" stroke-width=".9"/>
<path d="M446.9 57.3l4.500 4.500l-4.500 4.500l-4.500 -4.500z" fill="#9a9cf0" stroke="#1c2a6c" stroke-width=".9"/>
<path d="M472.8 60.2l4.500 4.500l-4.500 4.500l-4.500 -4.500z" fill="#9a9cf0" stroke="#1c2a6c" stroke-width=".9"/>
<path d="M498.6 35.0l4.500 4.500l-4.500 4.500l-4.500 -4.500z" fill="#9a9cf0" stroke="#1c2a6c" stroke-width=".9"/>
<path d="M524.4 60.9l4.500 4.500l-4.500 4.500l-4.500 -4.500z" fill="#9a9cf0" stroke="#1c2a6c" stroke-width=".9"/>
<path d="M550.2 79.1l4.500 4.500l-4.500 4.500l-4.500 -4.500z" fill="#9a9cf0" stroke="#1c2a6c" stroke-width=".9"/>
<path d="M576.1 115.0l4.500 4.500l-4.500 4.500l-4.500 -4.500z" fill="#9a9cf0" stroke="#1c2a6c" stroke-width=".9"/>
<path d="M601.9 122.1l4.500 4.500l-4.500 4.500l-4.500 -4.500z" fill="#9a9cf0" stroke="#1c2a6c" stroke-width=".9"/>
<path d="M627.8 117.2l4.500 4.500l-4.500 4.500l-4.500 -4.500z" fill="#9a9cf0" stroke="#1c2a6c" stroke-width=".9"/>
<path d="M653.6 141.4l4.500 4.500l-4.500 4.500l-4.500 -4.500z" fill="#9a9cf0" stroke="#1c2a6c" stroke-width=".9"/>
<text transform="translate(17,89) rotate(-90)" font-size="11" fill="#d4502c" text-anchor="middle">ログ件数</text>
<text transform="translate(722,89) rotate(-90)" font-size="11" fill="#3f88cc" text-anchor="middle" letter-spacing=".5">送信サイズ(バイト)</text>
</svg>
<div class="abs nw" style="left:230px;top:424px;width:192px;height:18px;line-height:18px;font-size:11.500px;letter-spacing:-.6px">絞り込みたいデータを選択してください。</div>
<div class="abs" style="left:424px;top:427px;width:0;height:14px;border-left:1px dotted #999"></div>
<div class="abs" style="left:490px;top:427px;width:0;height:14px;border-left:1px dotted #999"></div>
<div class="abs" style="left:556px;top:427px;width:0;height:14px;border-left:1px dotted #999"></div>
<div class="abs nw lnk" style="left:434px;top:424px;height:18px;line-height:18px;letter-spacing:-.3px">全件表示</div>
<div class="abs nw lnk" style="left:499px;top:424px;height:18px;line-height:18px;letter-spacing:-.3px">一部表示</div>
<div class="th" style="left:220px;width:53px;border-left-color:#d6d3c3"></div>
<div class="th" style="left:272px;width:153px">時間帯 <svg width="11" height="10" style="vertical-align:-1px"><path d="M5.500 .5l5 9H.5z" fill="#7f9ccb"/></svg></div>
<div class="th" style="left:424px;width:239px">ログ件数</div>
<div class="th" style="left:662px;width:310px">送信サイズ(バイト)</div>
<div class="row" style="top:470px"><span style="left:0;width:46px">1</span><span style="left:52px;width:145px">0</span><span style="left:204px;width:105px">1,051</span><span style="left:314px;width:123px">2.11%</span><span style="left:442px;width:174px">9,355,551</span><span style="left:622px;width:124px">3.45%</span></div>
<div class="row" style="top:491px"><span style="left:0;width:46px">2</span><span style="left:52px;width:145px">1</span><span style="left:204px;width:105px">1,824</span><span style="left:314px;width:123px">3.66%</span><span style="left:442px;width:174px">7,432,797</span><span style="left:622px;width:124px">2.74%</span></div>
<div class="row sel" style="top:512px"><span style="left:0;width:46px">3</span><span style="left:52px;width:145px">2</span><span style="left:204px;width:105px">305</span><span style="left:314px;width:123px">0.61%</span><span style="left:442px;width:174px">2,996,190</span><span style="left:622px;width:124px">1.11%</span></div>
<div class="row" style="top:533px"><span style="left:0;width:46px">4</span><span style="left:52px;width:145px">3</span><span style="left:204px;width:105px">167</span><span style="left:314px;width:123px">0.33%</span><span style="left:442px;width:174px">1,918,991</span><span style="left:622px;width:124px">0.71%</span></div>
<div class="row" style="top:554px"><span style="left:0;width:46px">5</span><span style="left:52px;width:145px">4</span><span style="left:204px;width:105px">58</span><span style="left:314px;width:123px">0.12%</span><span style="left:442px;width:174px">525,479</span><span style="left:622px;width:124px">0.19%</span></div>
<div class="row sel" style="top:575px"><span style="left:0;width:46px">6</span><span style="left:52px;width:145px">5</span><span style="left:204px;width:105px">644</span><span style="left:314px;width:123px">1.29%</span><span style="left:442px;width:174px">3,115,876</span><span style="left:622px;width:124px">1.15%</span></div>
<div class="row sel" style="top:596px"><span style="left:0;width:46px">7</span><span style="left:52px;width:145px">6</span><span style="left:204px;width:105px">68</span><span style="left:314px;width:123px">0.14%</span><span style="left:442px;width:174px">689,697</span><span style="left:622px;width:124px">0.25%</span></div>
<div class="row" style="top:617px"><span style="left:0;width:46px">8</span><span style="left:52px;width:145px">7</span><span style="left:204px;width:105px">787</span><span style="left:314px;width:123px">1.58%</span><span style="left:442px;width:174px">2,670,376</span><span style="left:622px;width:124px">0.99%</span></div>
<div class="vl" style="left:220px;top:470px;height:171px"></div>
<div class="vl" style="left:272px;top:470px;height:171px"></div>
<div class="vl" style="left:424px;top:470px;height:171px"></div>
<div class="vl" style="left:535px;top:470px;height:171px"></div>
<div class="vl" style="left:662px;top:470px;height:171px"></div>
<div class="vl" style="left:842px;top:470px;height:171px"></div>
<div class="vl" style="left:971px;top:470px;height:171px"></div>
<div class="abs" style="left:979px;top:442px;width:16px;height:198px;background:linear-gradient(to right,#efeee6 0,#f9f8f3 5px,#fbfaf6 11px,#f3f2ec 16px)"></div>
<div class="abs" style="left:979px;top:442px;width:16px;height:15px;border:1px solid #b9caf5;border-radius:2px;background:linear-gradient(135deg,#cbd9fc,#b4c6f5)"><svg class="abs" style="left:0;top:0" width="14" height="13"><path d="M3.500 8.500L7 5l3.500 3.500" fill="none" stroke="#4d6185" stroke-width="2"/></svg></div>
<div class="abs" style="left:979px;top:625px;width:16px;height:15px;border:1px solid #b9caf5;border-radius:2px;background:linear-gradient(135deg,#cbd9fc,#b4c6f5)"><svg class="abs" style="left:0;top:0" width="14" height="13"><path d="M3.500 4.500L7 8l3.500 -3.500" fill="none" stroke="#4d6185" stroke-width="2"/></svg></div>
<div class="abs" style="left:979px;top:459px;width:16px;height:57px;border:1px solid #a9bdf0;border-radius:2px;background:linear-gradient(to right,#cad8fb,#bfcffa 55%,#b0c1f2)"><div class="abs" style="left:4px;top:23px;width:6px;height:8px;background:repeating-linear-gradient(to bottom,#f2f6ff 0,#f2f6ff 1px,#97b1ee 1px,#97b1ee 2px)"></div></div>
<div class="xpbtn" style="left:222px;top:646px;width:251px;border-width:2px;border-color:#0c3468;letter-spacing:.6px;line-height:13px">選んだ項目で絞込レポート作成</div>
</div>
</body>
</html>
